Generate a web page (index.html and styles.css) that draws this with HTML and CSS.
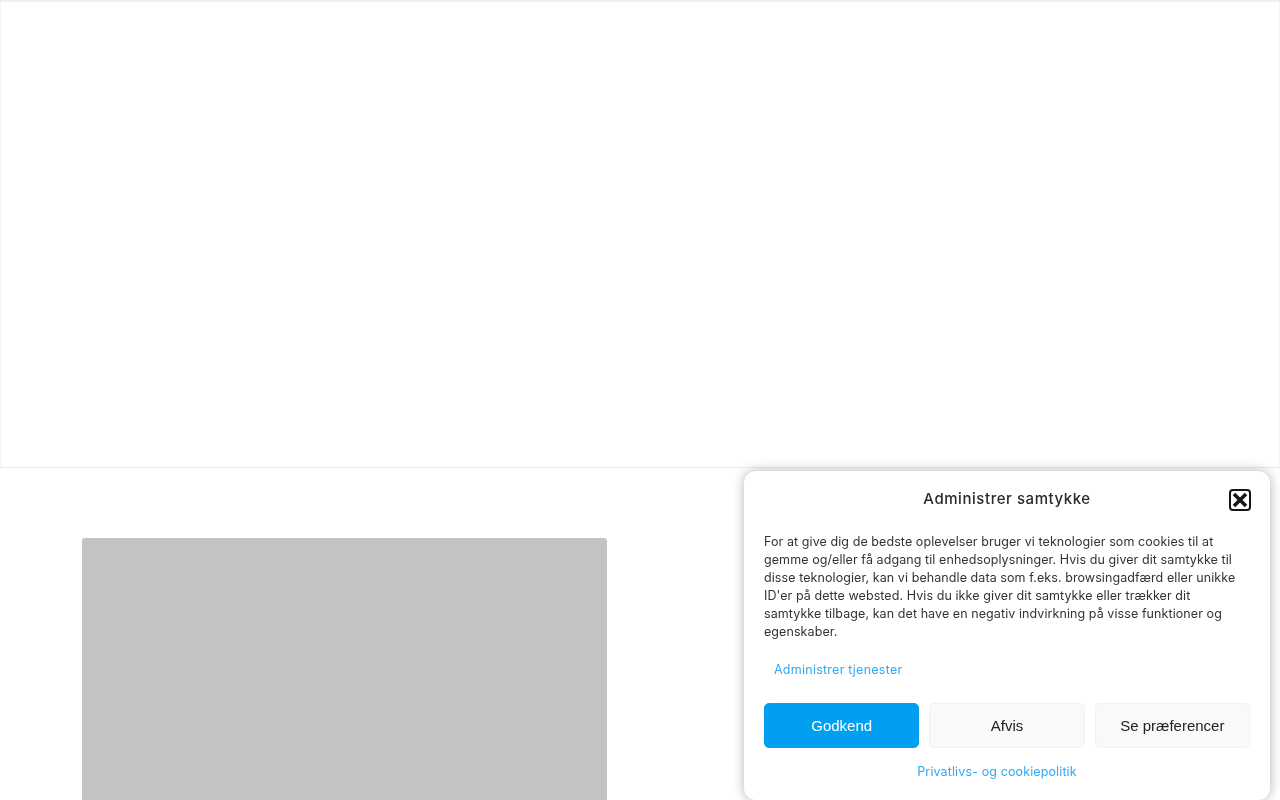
FILE: index.html
```html
<!DOCTYPE html>
<html lang="da">
<head>
  <meta charset="UTF-8">
  <meta name="viewport" content="width=device-width, initial-scale=1.0">
  <title>Administrer samtykke</title>
  <link rel="stylesheet" href="styles.css">
</head>
<body>
  <div class="hero"></div>

  <div class="content">
    <div class="image-placeholder"></div>
  </div>

  <div class="cookie-banner">
    <div class="cookie-header">
      <div class="cookie-title">Administrer samtykke</div>
      <button class="cookie-close" aria-label="Luk">
        <svg width="22" height="22" viewBox="0 0 22 22">
          <rect x="1" y="1" width="20" height="20" rx="3" fill="none" stroke="#161616" stroke-width="2"/>
          <path d="M5 5L17 17M17 5L5 17" fill="none" stroke="#161616" stroke-width="3.6"/>
        </svg>
      </button>
    </div>
    <p class="cookie-message">For at give dig de bedste oplevelser bruger vi teknologier som cookies til at<br>gemme og/eller få adgang til enhedsoplysninger. Hvis du giver dit samtykke til<br>disse teknologier, kan vi behandle data som f.eks. browsingadfærd eller unikke<br>ID'er på dette websted. Hvis du ikke giver dit samtykke eller trækker dit<br>samtykke tilbage, kan det have en negativ indvirkning på visse funktioner og<br>egenskaber.</p>
    <a class="cookie-link manage-link" href="#">Administrer tjenester</a>
    <div class="cookie-buttons">
      <button class="cookie-button accept">Godkend</button>
      <button class="cookie-button">Afvis</button>
      <button class="cookie-button">Se præferencer</button>
    </div>
    <div class="cookie-footer">
      <a class="cookie-link" href="#">Privatlivs- og cookiepolitik</a>
    </div>
  </div>
</body>
</html>
```

FILE: styles.css
```css
html, body {
  height: 100%;
}
body {
  margin: 0;
  overflow: hidden;
  background-color: #fff;
  font-family: "Inter", "Liberation Sans", sans-serif;
}
.hero {
  height: 467px;
  border-bottom: 1px solid #ebebeb;
  box-shadow: inset 0 3px 3px -2px #e2e2e2, inset 2px 0 2px -1px #f3f3f3, inset -2px 0 2px -1px #f3f3f3;
}
.content {
  padding: 70px 0 0 82px;
}
.image-placeholder {
  width: 525px;
  height: 262px;
  background-color: #c3c3c3;
  border-radius: 3px 3px 0 0;
}
.cookie-banner {
  position: fixed;
  right: 10px;
  bottom: 0;
  width: 526px;
  height: 329px;
  box-sizing: border-box;
  padding: 20px;
  background-color: #fff;
  border-radius: 12px;
  box-shadow: 0 0 12px rgba(0, 0, 0, 0.3);
  color: #333;
}
.cookie-header {
  display: flex;
  align-items: center;
  justify-content: center;
  position: relative;
  height: 16px;
}
.cookie-title {
  margin-top: -2px;
  font-size: 15px;
  font-weight: 500;
  letter-spacing: 0.55px;
  color: #2a2a2a;
}
.cookie-close {
  position: absolute;
  right: -1px;
  top: -2px;
  width: 22px;
  height: 22px;
  padding: 0;
  border: none;
  background: none;
  line-height: 0;
}
.cookie-message {
  margin: 26px 0 0;
  font-size: 12.5px;
  line-height: 18px;
  letter-spacing: 0.08px;
  white-space: nowrap;
}
.cookie-link {
  color: #2fa9f2;
  font-size: 12.5px;
  line-height: 18px;
  letter-spacing: 0.12px;
  text-decoration: none;
}
.manage-link {
  display: block;
  margin: 20px 0 0 10px;
  letter-spacing: 0.25px;
}
.cookie-buttons {
  display: grid;
  grid-template-columns: repeat(3, 1fr);
  gap: 10px;
  margin-top: 24px;
}
.cookie-button {
  height: 45px;
  border: 1px solid #f2f2f2;
  border-radius: 5px;
  background-color: #f9f9f9;
  color: #222;
  font-family: "Liberation Sans", Arial, sans-serif;
  font-size: 15px;
}
.cookie-button.accept {
  background-color: #009fef;
  border-color: #009fef;
  color: #fff;
}
.cookie-footer {
  margin-top: 12px;
  padding-right: 20px;
  text-align: center;
}
```
